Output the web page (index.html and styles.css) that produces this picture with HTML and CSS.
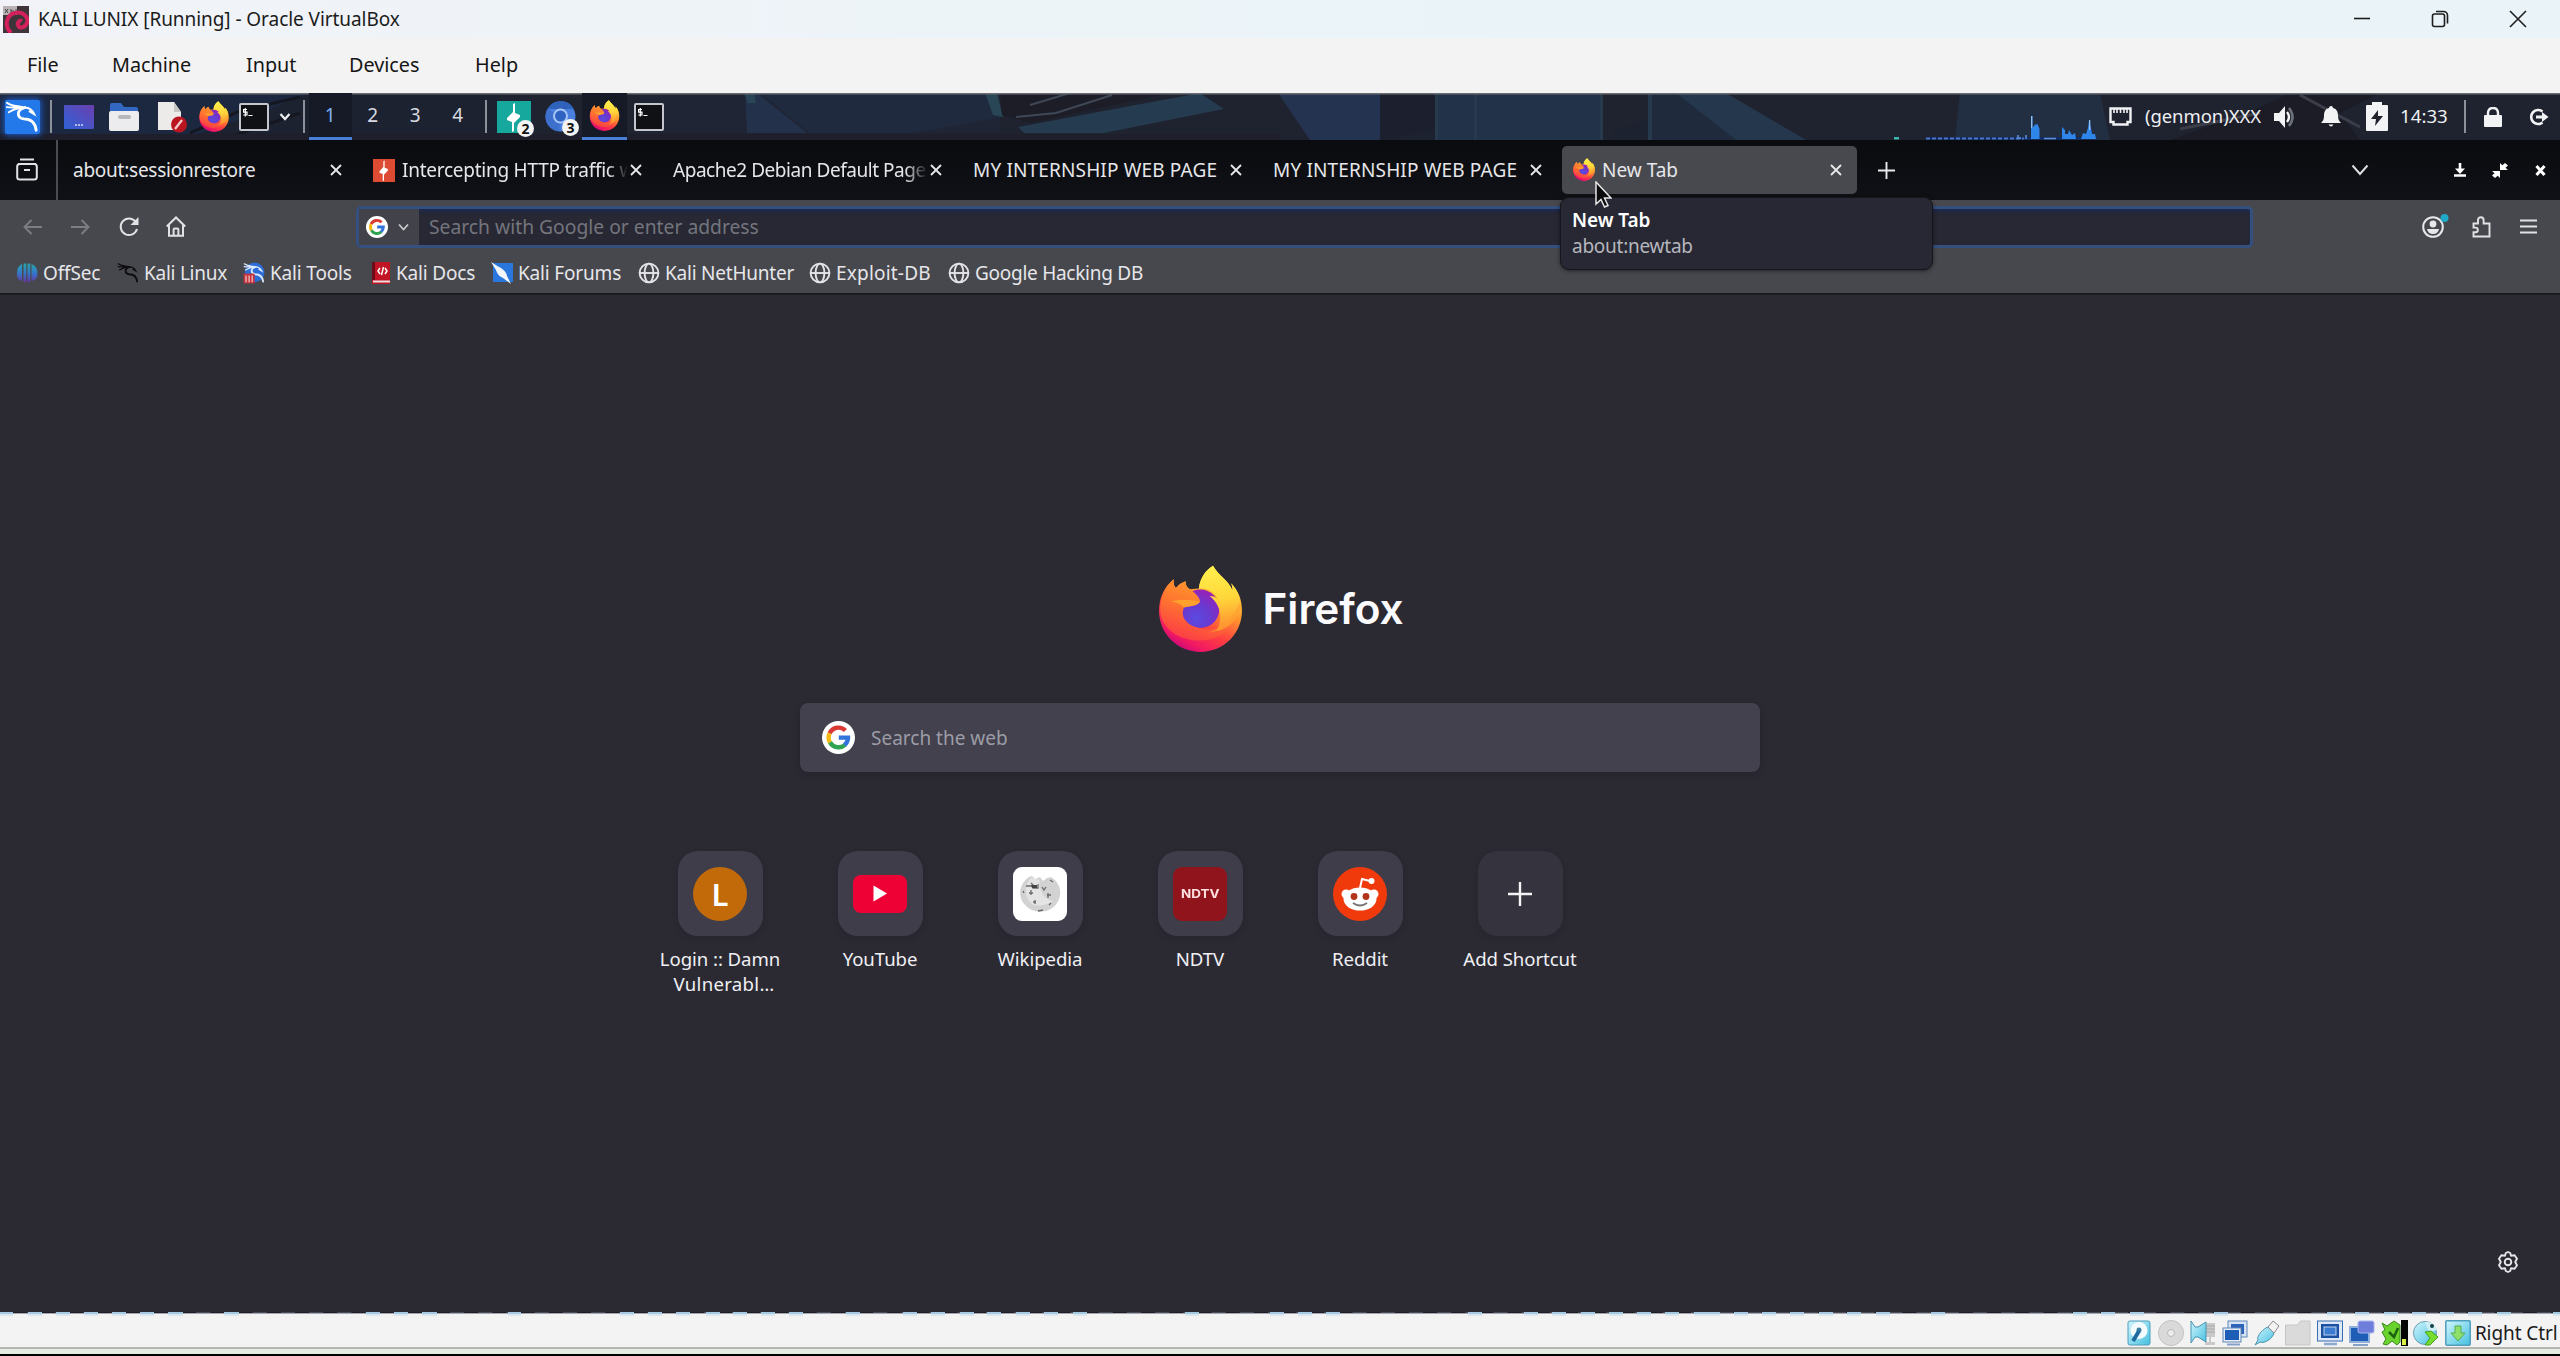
FILE: index.html
```html
<!DOCTYPE html>
<html lang="en">
<head>
<meta charset="utf-8">
<title>KALI LUNIX [Running] - Oracle VirtualBox</title>
<link rel="stylesheet" href="styles.css">
</head>
<body>
<svg class="defs" aria-hidden="true">
  <defs>
    <linearGradient id="ffBody" x1="0.8" y1="0.1" x2="0.3" y2="1">
      <stop offset="0" stop-color="#ffe03f"/><stop offset="0.35" stop-color="#ff9a2e"/><stop offset="0.65" stop-color="#ff4040"/><stop offset="0.88" stop-color="#f01864"/><stop offset="1" stop-color="#c6087c"/>
    </linearGradient>
    <linearGradient id="ffHead" x1="0.7" y1="0" x2="0.3" y2="1">
      <stop offset="0" stop-color="#ffa32b"/><stop offset="0.5" stop-color="#ff7430"/><stop offset="1" stop-color="#fb3a46"/>
    </linearGradient>
    <linearGradient id="ffFlame" x1="0.4" y1="0" x2="0.5" y2="1">
      <stop offset="0" stop-color="#fff04d"/><stop offset="0.5" stop-color="#ffd83b"/><stop offset="1" stop-color="#ff8a2f"/>
    </linearGradient>
    <radialGradient id="ffGlobe" cx="0.4" cy="0.75" r="0.8">
      <stop offset="0" stop-color="#5a4be0"/><stop offset="0.5" stop-color="#6b38cf"/><stop offset="1" stop-color="#9c1fb4"/>
    </radialGradient>
    <linearGradient id="desk" x1="0" y1="1" x2="1" y2="0"><stop offset="0" stop-color="#2f63d6"/><stop offset="1" stop-color="#6b3fb0"/></linearGradient>
    <linearGradient id="off" x1="0" y1="0" x2="0" y2="1"><stop offset="0" stop-color="#27a5a8"/><stop offset="0.5" stop-color="#3477c9"/><stop offset="1" stop-color="#6a2fa0"/></linearGradient>
    <linearGradient id="aqua" x1="0" y1="0" x2="1" y2="1"><stop offset="0" stop-color="#d2f6fd"/><stop offset="1" stop-color="#45bfe0"/></linearGradient>
  </defs>
  <symbol id="firefox" viewBox="0 0 246 258">
    <path fill="url(#ffBody)" d="M44 42C18 62 0 95 0 136c0 68 55 122 123 122s123-54 123-122c0-32-10-60-32-82 3 8 4 14 4 22C205 45 175 30 160 2c-20 13-38 33-42 68L92 72C82 66 78 58 79 48 68 52 58 58 50 68 44 62 42 52 44 42Z"/>
    <circle cx="122" cy="130" r="57" fill="url(#ffGlobe)"/>
    <path fill="url(#ffHead)" d="M79 48C68 52 58 58 50 68 44 62 42 52 44 42 16 64 2 98 4 140c4 38 40 80 110 84 50 2 90-20 106-60-30 26-60 32-96 24-44-8-62-36-50-62 14-6 38-2 48-18-2-13-14-24-30-36C82 66 78 58 79 48Z"/>
    <path fill="#ffb02c" opacity="0.7" d="M34 108c26-8 56-6 88 0-8 14-32 14-48 18-8-10-22-16-40-18Z"/>
    <path fill="url(#ffFlame)" d="M118 70C122 35 140 15 160 2c15 28 48 44 58 74 0-8-1-14-4-22 24 26 34 60 22 92-12 26-38 44-66 50 18-30 18-74-20-104 12 0 20 4 26 12-10-22-32-36-58-34Z"/>
    <path fill="#ff9b30" opacity="0.6" d="M240 110c2 50-30 86-94 90 44-14 74-40 94-90Z"/>
  </symbol>
  <symbol id="google" viewBox="0 0 33 33">
    <circle cx="16.5" cy="16.5" r="16.5" fill="#fff"/>
    <g fill="none" stroke-width="4.4">
      <path stroke="#d93a34" d="M7.6 12.2A9.8 9.8 0 0 1 23.4 9.5"/>
      <path stroke="#f5b912" d="M8 21.4a9.800 9.800 0 0 1-.4-9.200"/>
      <path stroke="#2fa350" d="M23 23.8A9.800 9.800 0 0 1 8 21.4"/>
      <path stroke="#3273dc" d="M16.8 16.6h9.200a9.800 9.800 0 0 1-3.400 7.400"/>
    </g>
  </symbol>
  <symbol id="globe" viewBox="0 0 22 22">
    <g fill="none" stroke="#e4e4e8" stroke-width="1.9"><circle cx="11" cy="11" r="9.4"/><ellipse cx="11" cy="11" rx="4.4" ry="9.4"/><path d="M1.6 11h18.8"/></g>
  </symbol>
  <symbol id="dragon" viewBox="0 0 36 34">
    <path fill="none" stroke="currentColor" stroke-linecap="round" stroke-width="2" d="M2 2c5 4 12 3 19 5M2 6.500c6 1 13 0 19 .5M4 12c5-3 11-5 17-5 5 0 8 3 10 7l-5-3"/>
    <path fill="none" stroke="currentColor" stroke-linecap="round" stroke-width="3" d="M21 7c-9 2-9 11-1 12 8 0 12 4 13 12"/>
  </symbol>
  <symbol id="term" viewBox="0 0 30 28">
    <rect x="1" y="1" width="28" height="26" rx="1" fill="#101114" stroke="#c3c7cd" stroke-width="2"/>
    <path fill="none" stroke="#fff" stroke-width="1.2" d="M8 6.500H4.600v2.700H8v2.800H4.300M6.300 5v8.500M9.500 12.500h4"/>
  </symbol>
  <symbol id="x" viewBox="0 0 12 12"><path stroke="#e8e8ea" stroke-width="1.8" d="M1 1l10 10M11 1L1 11"/></symbol>
  <symbol id="burp" viewBox="0 0 34 32"><path fill="#fff" d="M18 2v10l5 2v2l-6 6v8l-2 1v-10l-5-2v-2l6-6V3Z"/></symbol>
</svg>

<header class="titlebar">
  <svg class="app-icon" viewBox="0 0 26 27"><rect width="26" height="27" fill="#3e3439"/><rect width="14" height="9" fill="#b9b3b5"/><path d="M2 7l3-4M2 3l3 4M8 3v4h3V5H8M13 3v4" stroke="#444" fill="none"/><path d="M8 27C1 20 3 9 12 7c8-2 14 4 12 10-2 5-8 6-9 2-1-3 2-5 4-4" fill="none" stroke="#d3215c" stroke-width="4"/></svg>
  <span class="title">KALI LUNIX [Running] - Oracle VirtualBox</span>
  <div class="win-buttons">
    <svg width="18" height="20" viewBox="0 0 18 20"><path d="M1 9.500h16" stroke="#1d1d1d" stroke-width="1.600"/></svg>
    <svg width="18" height="20" viewBox="0 0 18 20" fill="none" stroke="#1d1d1d" stroke-width="1.600"><rect x="1.500" y="5" width="12" height="12.500" rx="2"/><path d="M5 2.500h7.500a4 4 0 0 1 4 4v8"/></svg>
    <svg width="18" height="20" viewBox="0 0 18 20"><path d="M1 2l16 16M17 2L1 18" stroke="#1d1d1d" stroke-width="1.600"/></svg>
  </div>
</header>
<nav class="menubar"><span class="m-file">File</span><span class="m-machine">Machine</span><span class="m-input">Input</span><span class="m-devices">Devices</span><span>Help</span></nav>

<section class="panel">
  <svg class="wallpaper" viewBox="0 0 2560 47" preserveAspectRatio="none">
    <rect width="2560" height="47" fill="#1f222f"/>
    <g opacity="0.75">
    <path fill="#212638" d="M640 0h360v40H640z"/>
    <path fill="#1b2a45" d="M0 0h500v20L300 47H0z"/><path fill="#1d2231" d="M180 47L260 20l50-20h190v47z"/>
    <path fill="#263653" d="M745 0h12l50 40h-60z"/><path fill="#202d43" d="M760 0h230l12 24-90 16H810z"/>
    <path fill="#2d5264" d="M744 0h10l2 10h-8zM985 0h12l6 24-10-2z"/>
    <path fill="#1b1c25" d="M1000 0h170l-140 30-28-8z"/><path fill="#27445a" d="M1018 34L1200 0l24 16-120 24h-80z"/>
    <path fill="none" stroke="#4a5463" stroke-width="2" d="M1016 24l40-4 56-18M1030 12l40-12"/>
    <path fill="#26395a" d="M1278 0h102v47h-70z"/><path fill="#1c202e" d="M1380 0h55v47h-55z"/>
    <path fill="#223852" d="M1437 0h163v47h-163z"/><path fill="#1c2230" d="M1384 47l50-10v10zM1612 38l35-10v19h-35z"/>
    <path fill="#2a4258" d="M1435 0h3v47h-3zM1474 0h3v47h-3zM1600 0h3v47h-3zM1648 0h4v47h-4z"/>
    <path fill="#1f2f42" d="M1652 0h24l60 47h-84z"/><path fill="#283f58" d="M1676 0h50l80 47h-70z"/>
    <path fill="#233347" d="M1960 0h140l10 47H1955z"/><path fill="#1a1b22" d="M2170 47l80-28 40-19h90l-40 20 20 27z"/>
    <path fill="none" stroke="#454852" stroke-width="3" d="M2180 36l80-16M2300 2l60 32"/>
    <path fill="none" stroke="#12141c" stroke-width="3" d="M190 40l50-22 60-14M230 44l70-24"/>
    </g>
    <rect y="41" width="1280" height="6" fill="#1f1e2b"/><rect width="2560" height="1.500" fill="#6b6d72"/>
  </svg>
  <div class="kali-menu"><svg width="34" height="34"><use href="#dragon"/></svg></div>
  <i class="sep s1"></i>
  <svg class="p-desk" width="30" height="24" viewBox="0 0 30 24"><rect width="30" height="24" rx="1" fill="url(#desk)"/><path d="M11 20h2m1 0h2m1 0h2" stroke="#d8daf5" stroke-width="1.600"/></svg>
  <svg class="p-folder" width="30" height="28" viewBox="0 0 30 28"><path d="M1 2q0-2 2-2h9l3 4h12q2 0 2 2v6H1z" fill="#3268c4"/><rect y="8" width="30" height="20" rx="2" fill="#ececee"/><rect x="9" y="12" width="13" height="4" rx="2" fill="#b6b7bb"/></svg>
  <svg class="p-doc" width="32" height="32" viewBox="0 0 32 32"><path d="M1 1h16l7 10v18H1z" fill="#ecebea"/><path d="M17 1l7 10h-7z" fill="#c8c6c4"/><circle cx="22" cy="23.500" r="8" fill="#ba1620"/><path d="M18 28l7-9" stroke="#f3cfd0" stroke-width="2.200"/></svg>
  <svg class="p-ff" width="30" height="31"><use href="#firefox"/></svg>
  <svg class="p-term" width="30" height="28"><use href="#term"/></svg>
  <svg class="p-chev" width="12" height="8" viewBox="0 0 12 8"><path d="M1.500 1L6 6l4.500-5" fill="none" stroke="#eceef1" stroke-width="2.200"/></svg>
  <i class="sep s2"></i>
  <div class="workspaces"><span class="current">1</span><span>2</span><span>3</span><span>4</span></div>
  <i class="sep s3"></i>
  <div class="task t-burp"><svg width="34" height="32"><rect width="34" height="32" fill="#16a79d"/><use href="#burp"/></svg><b class="badge">2</b></div>
  <div class="task t-chrome"><svg width="31" height="31" viewBox="0 0 31 31"><circle cx="15.500" cy="15.500" r="15" fill="#4a7fe0"/><path d="M15.500 15.500L2.500 8A15 15 0 0 0 14 30.500z" fill="#3d70cc"/><path d="M2.500 8a15 15 0 0 1 26.500 0z" fill="#2f62bb"/><circle cx="15.500" cy="15" r="7.500" fill="#a9c5f6"/><circle cx="15.500" cy="15" r="5.500" fill="#2f63c2"/></svg><b class="badge">3</b></div>
  <div class="task-active"><svg width="31" height="31"><use href="#firefox"/></svg></div>
  <svg class="t-term" width="30" height="28"><use href="#term"/></svg>
  <div class="tray">
    <svg class="graph" width="206" height="46" viewBox="0 0 206 46">
      <rect x="32" y="43.500" width="171" height="2" fill="#0a2d78"/><path d="M32 44.500h98" stroke="#4b74c4" stroke-width="2" stroke-dasharray="4 2"/>
      <path fill="#2f86ea" d="M137 45V22h1.500v12l2-3 3-1 2 5v10zM168 45V33l3 3v4h3l1-4 3 5 3-2 1 6zM187 45l2-6 3 1 2-6 1-8 2 8 1 6h3l1 5z"/>
      <path fill="#8fc0f0" d="M137 22h1.300v12h-1.300zM195 26h1.300v10h-1.300z"/><path d="M124 45v-4M126 45v-2M132 45v-4M150 44.500h12" stroke="#5f92da" stroke-width="1.500"/>
      <rect x="0" y="43" width="5" height="2.500" fill="#39b9ae"/>
    </svg>
    <svg class="eth" width="23" height="19" viewBox="0 0 23 19"><path d="M1.500 1.500h20V15h-3v2.500h-14V15h-3z" fill="none" stroke="#f0f1f3" stroke-width="2.400"/><path d="M5 2v4M8 2v4M11.500 2v4M15 2v4M18 2v4" stroke="#f0f1f3" stroke-width="1.600"/></svg>
    <span class="genmon">(genmon)XXX</span>
    <svg class="vol" width="24" height="24" viewBox="0 0 24 24"><path d="M1 8h5l6-7v22l-6-7H1z" fill="#f2f3f5"/><path d="M14 7q4 5 0 10" fill="none" stroke="#f2f3f5" stroke-width="2.400"/><path d="M16 3q7 9 0 18" fill="none" stroke="#6c7079" stroke-width="2.600"/></svg>
    <svg class="bell" width="20" height="21" viewBox="0 0 20 21"><path d="M10 0q2 0 2 2c4 1 5 4 5 8 0 3 1 5 3 7H0c2-2 3-4 3-7 0-4 1-7 5-8q0-2 2-2zM7.500 18.500h5q-2.500 4-5 0z" fill="#f2f3f5"/></svg>
    <svg class="batt" width="22" height="29" viewBox="0 0 22 29"><path d="M1 3h5V0h10v3h5q1 0 1 1v24q0 1-1 1H1q-1 0-1-1V4q0-1 1-1z" fill="#f2f3f5"/><path d="M12 8l-7 9h5l-1 7 8-10h-5z" fill="#20222d"/></svg>
    <span class="clock">14:33</span>
    <i class="sep s4"></i>
    <svg class="lock" width="18" height="20" viewBox="0 0 18 20"><rect y="8" width="18" height="12" rx="1" fill="#f2f3f5"/><path d="M4 9V6q0-5 5-5t5 5v3" fill="none" stroke="#f2f3f5" stroke-width="2.400"/></svg>
    <svg class="logout" width="20" height="18" viewBox="0 0 20 18"><path d="M13.500 3.500A7 7 0 1 0 13.500 14.500" fill="none" stroke="#f2f3f5" stroke-width="2.600"/><path d="M7 7.600h6V4l6.500 5-6.500 5v-3.600H7z" fill="#f2f3f5"/></svg>
  </div>
</section>

<section class="tabbar">
  <div class="view"><svg width="22" height="23" viewBox="0 0 22 23" fill="none" stroke="#e2e2e5" stroke-width="2"><path d="M4 1.500h14M2 6h18"/><rect x="1.200" y="6" width="19.600" height="15.500" rx="2.500"/><path d="M8 12h6"/></svg></div>
  <div class="tab"><span class="label a">about:sessionrestore</span><svg><use href="#x"/></svg></div>
  <div class="tab"><svg class="fav" viewBox="0 0 34 32" preserveAspectRatio="none"><rect width="34" height="32" fill="#dd4b32"/><use href="#burp"/></svg><span class="label">Intercepting HTTP traffic wi</span><svg><use href="#x"/></svg></div>
  <div class="tab"><span class="label b">Apache2 Debian Default Page: I</span><svg><use href="#x"/></svg></div>
  <div class="tab"><span class="label c">MY INTERNSHIP WEB PAGE</span><svg><use href="#x"/></svg></div>
  <div class="tab"><span class="label c">MY INTERNSHIP WEB PAGE</span><svg><use href="#x"/></svg></div>
  <div class="tab selected"><svg class="fav"><use href="#firefox"/></svg><span class="label">New Tab</span><svg><use href="#x"/></svg></div>
  <svg class="plus" width="17" height="17" viewBox="0 0 17 17"><path d="M8.500 0v17M0 8.500h17" stroke="#e8e8ea" stroke-width="1.900"/></svg>
  <div class="wm">
    <svg width="18" height="12" viewBox="0 0 18 12"><path d="M1.500 1.500L9 10l7.500-8.500" fill="none" stroke="#e2e2e5" stroke-width="1.900"/></svg>
    <svg class="w1" width="12" height="14" viewBox="0 0 12 14"><path d="M6 0v7M0 12.500h12" stroke="#fff" stroke-width="2.600"/><path d="M1 5.500h10L6 11z" fill="#fff"/></svg>
    <svg class="w2" width="16" height="15" viewBox="0 0 16 15"><path d="M8 7V0l2.300 2.300L13 0l3 2.500-2.500 2.200L16 7zM8 8v7l-2.300-2.300L3 15l-3-2.500 2.500-2.200L0 8z" fill="#fff"/></svg>
    <svg class="w3" width="11" height="11" viewBox="0 0 11 11"><path d="M1.500 1l8 9M9.500 1l-8 9" stroke="#fff" stroke-width="3"/></svg>
  </div>
  <div class="tooltip"><b>New Tab</b><span>about:newtab</span></div>
  <svg class="cursor" width="17" height="27" viewBox="0 0 17 27"><path d="M1 1v22l5-4.500 3.500 7.500 3.500-1.500-3.500-7.500H16z" fill="#0b0b0d" stroke="#e8e8ea" stroke-width="1.500"/></svg>
</section>

<section class="toolbar">
  <svg class="back" width="19" height="16" viewBox="0 0 19 16"><path d="M8.500 1L1.500 8l7 7M1.500 8H19" fill="none" stroke="#7d7e83" stroke-width="1.900"/></svg>
  <svg class="fwd" width="19" height="16" viewBox="0 0 19 16"><path d="M10.500 1l7 7-7 7M17.500 8H0" fill="none" stroke="#7d7e83" stroke-width="1.900"/></svg>
  <svg class="reload" width="20" height="20" viewBox="0 0 20 20"><path d="M16.500 4.500A8.300 8.300 0 1 0 18 12" fill="none" stroke="#e2e2e5" stroke-width="2"/><path d="M19.500 0v8h-8z" fill="#e2e2e5"/></svg>
  <svg class="home" width="20" height="21" viewBox="0 0 20 21"><path d="M.8 10.500L10 1.500l9.200 9M3 9v10.800h14V9M7.600 19.500v-6q0-1 1-1h2.800q1 0 1 1v6" fill="none" stroke="#e2e2e5" stroke-width="2"/></svg>
  <div class="urlbar">
    <div class="engine"><svg width="22" height="22"><use href="#google"/></svg><svg width="11" height="8" viewBox="0 0 11 8"><path d="M1 1.500l4.500 5 4.500-5" fill="none" stroke="#c9cacd" stroke-width="1.800"/></svg></div>
    <span class="placeholder">Search with Google or enter address</span>
  </div>
  <svg class="account" width="28" height="25" viewBox="0 0 28 25"><circle cx="11" cy="14" r="9.800" fill="none" stroke="#e8e8ea" stroke-width="2"/><circle cx="11" cy="11" r="3.400" fill="#e8e8ea"/><path d="M5 16h12q-1 5-6 5t-6-5z" fill="#e8e8ea"/><circle cx="22.500" cy="5" r="4" fill="#20a8c8"/></svg>
  <svg class="ext" width="19" height="22" viewBox="0 0 19 22"><path d="M1.500 7.500H6V4a2.800 2.800 0 0 1 5.600 0v3.500H17.500V20.500H1.500v-4.300h2a2.300 2.300 0 0 0 0-4.600h-2z" fill="none" stroke="#e2e2e5" stroke-width="1.900"/></svg>
  <svg class="burger" width="17" height="15" viewBox="0 0 17 15"><path d="M0 1.500h17M0 7.500h17M0 13.500h17" stroke="#e2e2e5" stroke-width="1.900"/></svg>
</section>

<section class="bookmarks">
  <div class="bm w-off"><svg viewBox="0 0 22 22"><path d="M1 12Q1 4 6 2v17q-5-1-5-7zM7.500 1.500h2.800V21L7.500 19zM11.500 1.500h2.800V19l-2.800 2zM15.500 2q6 2 6 10 0 6-6 7z" fill="url(#off)"/></svg>OffSec</div>
  <div class="bm w-linux"><svg class="blk" viewBox="0 0 36 34"><use href="#dragon"/></svg>Kali Linux</div>
  <div class="bm w-tools"><svg viewBox="0 0 36 34"><circle cx="19" cy="16" r="16" fill="#2c6cd6"/><g color="#dbe9ff"><use href="#dragon"/></g><path d="M1 18h18v16H1z" fill="#c6323c"/><path d="M5 21v11M10 21v11M15 21v11" stroke="#f3c6c8" stroke-width="2"/></svg>Kali Tools</div>
  <div class="bm w-docs"><svg viewBox="0 0 20 22"><rect x="1" width="18" height="22" fill="#c11424"/><path d="M1 0h3v18H1z" fill="#6d0c16"/><path d="M2 19.500h17" stroke="#f0dfe0" stroke-width="2"/><path d="M9 6l-2 3 2 3M14 6l2 3-2 3M12.500 5l-2 8" fill="none" stroke="#fff" stroke-width="1.500"/></svg>Kali Docs</div>
  <div class="bm w-forums"><svg viewBox="0 0 22 22"><rect x="2" y="1" width="20" height="19" fill="#2977dc"/><path d="M0 0q6 4 10 6 5 3 6 8l4 8-8-6q-6-3-7-8z" fill="#f2f6fb"/></svg>Kali Forums</div>
  <div class="bm w-net"><svg><use href="#globe"/></svg>Kali NetHunter</div>
  <div class="bm w-exp"><svg><use href="#globe"/></svg>Exploit-DB</div>
  <div class="bm w-ghdb"><svg><use href="#globe"/></svg>Google Hacking DB</div>
</section>

<main class="newtab">
  <div class="brand"><svg width="83" height="87"><use href="#firefox"/></svg><span>Firefox</span></div>
  <div class="search"><svg width="33" height="33"><use href="#google"/></svg><span>Search the web</span></div>
  <div class="shortcuts">
    <div class="tile"><div class="box"><div class="letter">L</div></div><p>Login :: Damn<br><span class="vul">Vulnerabl…</span></p></div>
    <div class="tile"><div class="box"><svg width="56" height="40" viewBox="0 0 56 40"><rect x="1" y="1" width="54" height="38" rx="8" fill="#ee0236"/><path d="M21.500 11.500L35 19.500l-13.500 8z" fill="#fff"/></svg></div><p>YouTube</p></div>
    <div class="tile"><div class="box"><svg width="54" height="54" viewBox="0 0 54 54"><rect width="54" height="54" rx="9" fill="#fff"/><path d="M16 10a20 19 0 1 0 26 3l-4-3-4 1-4 3-3-4-5 2-3-3z" fill="#d2d2d2"/><path d="M18 11a18 18 0 0 0 2 27 26 24 0 0 0 20-4q-9-2-12-10-3-7-1-11z" fill="#e4e4e4"/><path d="M13 19h7v2h5v-4M18 16l5 5M29 20l2 3 2-3M16 26h4M18 23v5M34 28h4M35 26v5M20 35h3M22 33v4M36 38l2-2M37 13l3 2M10 24l1 2M30 43l-5 1" fill="none" stroke="#6b6b6b" stroke-width="1.300"/><path d="M18 18h6v3h-5z" fill="#444"/></svg></div><p>Wikipedia</p></div>
    <div class="tile"><div class="box"><div class="ndtv"><span>NDTV</span></div></div><p>NDTV</p></div>
    <div class="tile"><div class="box"><svg width="54" height="54" viewBox="0 0 54 54"><circle cx="27" cy="27" r="27" fill="#f13a0c"/><path d="M27 21l2-9 8 2" fill="none" stroke="#fff" stroke-width="2"/><circle cx="38.500" cy="14" r="3" fill="#fff"/><circle cx="13" cy="27" r="4.500" fill="#fff"/><circle cx="41" cy="27" r="4.500" fill="#fff"/><ellipse cx="27" cy="32" rx="16.500" ry="11.500" fill="#fff"/><circle cx="21" cy="29.500" r="3.400" fill="#b3331b"/><circle cx="33" cy="29.500" r="3.400" fill="#b3331b"/><path d="M20 36q7 5 14 0" fill="none" stroke="#777" stroke-width="2"/></svg></div><p>Reddit</p></div>
    <div class="tile"><div class="box add"><svg width="24" height="24" viewBox="0 0 24 24"><path d="M12 0v24M0 12h24" stroke="#f4f4f6" stroke-width="2.400"/></svg></div><p>Add Shortcut</p></div>
  </div>
  <svg class="gear" width="22" height="22" viewBox="0 0 22 22" fill="none" stroke="#e6e6ea" stroke-width="1.900" stroke-linejoin="round"><path d="M11 1l2.200 1 .8 2.700 3.600-.5 2.400 3.500-1.800 3.300 1.800 3.300-2.400 3.500-3.600-.5L13.200 20 11 21l-2.200-1-.8-2.700-3.600.5L2 14.300 3.800 11 2 7.700l2.400-3.500 3.600.5L8.800 2z"/><circle cx="11" cy="11" r="3.300"/></svg>
</main>

<footer class="statusbar">
  <svg class="dashes" width="2560" height="5" viewBox="0 0 2560 5">
    <path d="M0 .5H2560" stroke="#4b4c58"/>
    <path d="M0 1.500H2560" stroke="#a3a7b3"/>
    <path d="M13 .5H2560" stroke="#1f1e25" stroke-dasharray="14.100 14.100"/>
    <path id="lit" stroke="#a5c9e2" stroke-width="2" d="M0 1h13M28 1h14M56 1h14M84 1h14M112 1h14M140 1h14M168 1h15M224 1h15M366 1h14M394 1h14M422 1h15M508 1h13M620 1h14M648 1h14M676 1h14M706 1h14M733 1h14M761 1h14M789 1h14M846 1h14M903 1h14M931 1h14M960 1h14M987 1h14M1016 1h14M1044 1h14M1073 1h14M1185 1h14M1270 1h14M1298 1h14M1326 1h14M1468 1h14M1524 1h14M1552 1h14M1581 1h14M1609 1h14M1637 1h14M1665 1h14M1694 1h26M1734 1h14M1762 1h14M1790 1h14M1819 1h14M1847 1h14M1876 1h14M1931 1h14M2073 1h14M2101 1h14M2130 1h14M2214 1h14M2327 1h14M2355 1h14M2384 1h14M2412 1h14M2440 1h14M2468 1h14M2497 1h14M2553 1h7"/>
    <use href="#lit" y="2" opacity="0.300"/>
  </svg>
  <div class="indicators">
    <svg viewBox="0 0 26 26"><rect x="2" y="1" width="22" height="24" rx="2" fill="url(#aqua)" stroke="#4f9dbb"/><circle cx="13" cy="10.500" r="8.500" fill="#f4fbfd"/><circle cx="13" cy="10" r="2.500" fill="#3c7fa3"/><path d="M13 11l-6 10" stroke="#1f6ba0" stroke-width="4"/></svg>
    <svg viewBox="0 0 26 26"><circle cx="13" cy="13" r="12.500" fill="#d9d9d9" stroke="#c2c2c2"/><circle cx="13" cy="13" r="3.500" fill="#ececec" stroke="#b7b7b7"/></svg>
    <svg viewBox="0 0 26 26"><path d="M16 3h9v14h-9zM15 22h10v3H15zM19 17h2v6h-2z" fill="#c9c9c9"/><path d="M16 6h9M16 9h9M16 12h9" stroke="#a8a8a8"/><path d="M1 1l4 6h3l8-5v20l-8-5H5l-4 6z" fill="url(#aqua)" stroke="#4b93b0"/></svg>
    <svg viewBox="0 0 26 26"><rect x="6" y="1" width="19" height="16" fill="#d6e3f4" stroke="#6087b8"/><rect x="9" y="4" width="13" height="10" fill="#2e64b8"/><rect x="1" y="8" width="18" height="14" fill="#e3ecf8" stroke="#6087b8"/><rect x="3" y="10" width="14" height="10" fill="#1f5eb6"/><path d="M5 24.500h13" stroke="#84a2c9" stroke-width="2"/></svg>
    <svg viewBox="0 0 26 26"><path d="M1 25l3-5c-2-4 6-12 10-13l6 6c-1 5-9 11-14 9z" fill="url(#aqua)" stroke="#4b93b0"/><path d="M14 7l5-6 6 5-5 7z" fill="#f3f3f3" stroke="#8b8b8b"/></svg>
    <svg viewBox="0 0 26 26"><path d="M.5 5h12l3-4h9.500v24H.5z" fill="#dadada" stroke="#c6c6c6"/></svg>
    <svg viewBox="0 0 26 26"><rect x=".5" y="1" width="25" height="20" fill="#dce8f8" stroke="#3b6fb0"/><rect x="4" y="4" width="18" height="14" fill="#1c50a2"/><rect x="7" y="7" width="12" height="8" fill="#3c7cd0" stroke="#bcd2ee"/><path d="M7 24h13" stroke="#8aa9cf" stroke-width="2.500"/></svg>
    <svg viewBox="0 0 26 26"><rect x="1" y="7" width="19" height="15" fill="#1f5eb6" stroke="#8fb0db" stroke-width="2"/><path d="M4 25h15" stroke="#84a2c9" stroke-width="2"/><rect x="9" y="1" width="16" height="12" rx="2" fill="#6f7edb" stroke="#a9b3ee"/></svg>
    <svg viewBox="0 0 26 26"><path d="M1 3l5 3 7-5 6 4v17l-3 3-5-4-5 4-4-1 3-5-4-7 3-2z" fill="#6bd32d" stroke="#3a8a1c"/><path d="M8 12l5 5 4-9" fill="none" stroke="#1c6012" stroke-width="2.500"/><rect x="20" width="7" height="26" fill="#050505"/><rect x="21" y="19" width="4" height="6" fill="#d9ef48"/></svg>
    <svg viewBox="0 0 26 26"><circle cx="12" cy="13" r="11.500" fill="url(#aqua)" stroke="#6c9db0"/><path d="M12 2q9-1 12 8l-8 2z" fill="#cfeff6"/><circle cx="19" cy="6" r="2" fill="#144"/><path d="M12 12l6-1 7 6-8 8h-5l5-7z" fill="#76dc2e" stroke="#47a01e"/></svg>
    <svg viewBox="0 0 26 26"><rect x=".8" y=".8" width="24.400" height="24.400" rx="1" fill="url(#aqua)" stroke="#4f9dbb" stroke-width="1.500"/><path d="M10 6h6v7h4l-7 8-7-8h4z" fill="#8fe06a" stroke="#54ae52"/></svg>
  </div>
  <span class="hostkey">Right Ctrl</span>
</footer>
<div class="edge"></div>
</body>
</html>
```
FILE: styles.css
```css
* { box-sizing: border-box; }
html, body { margin: 0; }
body {
  width: 2560px; height: 1356px; overflow: hidden;
  display: flex; flex-direction: column;
  background: #2b2a33; color: #e6e6ea;
  font: 19px/24px "Noto Sans", sans-serif;
  white-space: nowrap;
}
svg { display: block; flex: none; }
span { flex: none; }
.defs { position: absolute; width: 0; height: 0; }

.titlebar {
  height: 38px; flex: none; display: flex; align-items: center;
  padding: 0 33px 0 3px; color: #1b1b1b;
  background: linear-gradient(90deg, #f1f3f8, #eaf4f8 60%, #eaf4f8);
}
.app-icon { width: 26px; height: 27px; }
.title { margin-left: 9px; letter-spacing: -0.060px; }
.win-buttons { margin-left: auto; display: flex; gap: 60px; }

.menubar {
  height: 55px; flex: none; display: flex; align-items: center;
  padding: 0 0 2px 27px; background: #f3f3f3; color: #151515; font-size: 19.800px;
}
.m-file { width: 85px; }
.m-machine { width: 134px; }
.m-input { width: 103px; }
.m-devices { width: 126px; }

.panel {
  position: relative; height: 47px; flex: none;
  display: flex; align-items: center; background: #1f222f;
}
.panel > * { position: relative; flex: none; }
.panel > .wallpaper { position: absolute; inset: 0; width: 2560px; height: 47px; }
.kali-menu {
  margin-left: 5px; width: 35px; height: 34px; background: #2378ea; color: #fff;
  box-shadow: 0 0 6px 1px #1d5fd0; border-radius: 2px;
}
.sep { width: 2px; height: 33px; background: #8d9199; flex: none; }
.s1 { margin-left: 10px; }
.p-desk { margin-left: 12px; }
.p-folder { margin-left: 15px; }
.p-doc { margin-left: 18px; }
.p-ff { margin-left: 10px; }
.p-term { margin-left: 10px; }
.p-chev { margin-left: 10px; }
.s2 { margin-left: 12px; }
.workspaces { display: flex; margin-left: 4px; height: 47px; }
.workspaces span { width: 42.500px; text-align: center; line-height: 44px; color: #d8dbe1; }
.workspaces .current { background: #161a27; border-bottom: 3px solid #4a7fd8; color: #7fb0ee; }
.s3 { margin-left: 6px; }
.t-burp { margin-left: 10px; }
.t-chrome { margin-left: 14px; }
.badge {
  position: absolute; right: -3px; bottom: -4px; width: 17px; height: 17px;
  border-radius: 50%; background: #f4f4f4; color: #111;
  font-size: 14px; line-height: 17px; text-align: center;
}
.task-active {
  margin-left: 6px; width: 45px; height: 47px; padding: 7px 7px 0;
  background: #161a27; border-bottom: 3px solid #4a7fd8;
}
.t-term { margin-left: 7px; }
.tray { display: flex; align-items: center; margin-left: auto; padding-right: 11px; height: 47px; color: #eef0f3; }
.graph { align-self: flex-end; width: 206px; }
.eth { margin-left: 9px; }
.genmon { margin-left: 13px; width: 118px; font-size: 18.500px; letter-spacing: -0.080px; margin-top: -2px; }
.vol { margin-left: 10px; }
.bell { margin-left: 24px; }
.batt { margin-left: 25px; }
.clock { margin-left: 12px; width: 48px; font-size: 18.700px; margin-top: -2px; }
.s4 { margin-left: 16px; }
.lock { margin-left: 18px; }
.logout { margin-left: 27px; }

.tabbar {
  position: relative; height: 60px; flex: none; display: flex; align-items: center;
  background: linear-gradient(#0a0b0f, #101116);
}
.view { width: 58px; height: 60px; border-right: 2px solid #4b4c51; padding: 18px 16px; }
.tab { width: 300px; height: 48px; display: flex; align-items: center; padding: 0 15px 0 16px; }
.tab > svg { width: 12px; height: 12px; }
.tab > .fav { width: 22px; height: 23px; margin-right: 7px; }
.tab .label { flex: 1; min-width: 0; overflow: hidden; letter-spacing: -0.250px; }
.tab .a { margin-left: -1px; }
.tab .b { letter-spacing: -0.460px; }
.tab .c { letter-spacing: 0.150px; }
.tab:nth-child(2) { width: 299px; }
.tab:nth-child(3) .label, .tab:nth-child(4) .label {
  margin-right: 2px;
  -webkit-mask-image: linear-gradient(90deg, #000 91%, transparent); mask-image: linear-gradient(90deg, #000 91%, transparent);
}
.tab.selected { width: 295px; margin-left: 5px; padding-left: 11px; background: #48494e; border-radius: 5px; margin-top: -1px; }
.tab.selected .label { letter-spacing: 0; }
.plus { margin-left: 21px; }
.wm { display: flex; align-items: center; margin-left: auto; padding-right: 14px; }
.w1 { margin-left: 85px; }
.w2 { margin-left: 26px; }
.w3 { margin-left: 27px; }
.tooltip {
  position: absolute; left: 1560px; top: 57px; z-index: 3; width: 373px; height: 73px;
  display: flex; flex-direction: column; padding: 9px 11px; line-height: 26px;
  background: #272833; border: 1px solid #15151c; border-radius: 9px;
  box-shadow: 0 1px 4px rgba(0, 0, 0, .5); color: #b6b6bd; letter-spacing: -0.250px;
}
.tooltip b { color: #fff; font-weight: 600; letter-spacing: -0.080px; }
.cursor { position: absolute; left: 1595px; top: 41px; z-index: 4; }

.toolbar { height: 54px; flex: none; display: flex; align-items: center; background: #47484d; padding-bottom: 1px; }
.back { margin-left: 23px; }
.fwd { margin-left: 29px; }
.reload { margin-left: 29px; }
.home { margin-left: 27px; }
.urlbar {
  width: 1897px; height: 42px; margin-left: 170px; display: flex; align-items: center;
  background: #272833; border: 3px solid #34507f; border-radius: 5px; box-shadow: inset 0 3px 3px #20294b;
}
.engine { width: 60px; height: 36px; display: flex; align-items: center; gap: 10px; padding-left: 7px; background: #42434a; }
.placeholder { margin-left: 10px; color: #74757d; font-size: 19.300px; }
.account { margin-left: 169px; margin-top: -3px; }
.ext { margin-left: 22px; }
.burger { margin-left: 29px; }

.bookmarks {
  height: 41px; flex: none; display: flex; align-items: center; padding: 0 0 1px 16px;
  background: #47484d; border-bottom: 2px solid #1b1b20; letter-spacing: -0.170px;
}
.bm { display: flex; align-items: center; gap: 5px; }
.bm svg { width: 22px; height: 22px; }
.blk { color: #0c0c0e; }
.w-off { width: 101px; }
.w-linux { width: 126px; letter-spacing: -0.250px; }
.w-tools { width: 127px; }
.w-docs { width: 121px; gap: 4px; }
.w-forums { width: 147px; }
.w-net { width: 171px; letter-spacing: -0.220px; }
.w-exp { width: 139px; letter-spacing: 0.200px; }
.w-ghdb { letter-spacing: -0.270px; }

.newtab { position: relative; height: 1017px; flex: none; background: #2b2a33; display: flex; flex-direction: column; align-items: center; }
.brand { margin-top: 270px; height: 87px; width: 243px; display: flex; align-items: center; gap: 21px; color: #fbfbfe; font: 600 42.300px/60px "Inter", sans-serif; }
.search {
  width: 960px; height: 69px; margin-top: 51px; display: flex; align-items: center; gap: 16px;
  padding-left: 22px; background: #42414d; border-radius: 8px; color: #9d9ca6;
  box-shadow: 0 2px 6px rgba(20, 20, 28, .3);
}
.shortcuts { display: flex; margin: 79px 320px 0 0; width: 960px; }
.tile { width: 160px; display: flex; flex-direction: column; align-items: center; }
.box {
  width: 85px; height: 85px; border-radius: 20px; background: #3f3d49;
  display: flex; align-items: center; justify-content: center; box-shadow: 0 2px 6px rgba(20, 20, 28, .2);
}
.box.add { background: #35343e; }
.tile p { margin: 10px 0 0; text-align: center; font-size: 18.600px; line-height: 25px; letter-spacing: -0.060px; color: #f0f0f4; }
.vul { margin-left: 8px; letter-spacing: 0.300px; }
.letter { width: 54px; height: 54px; border-radius: 50%; background: #c26a09; color: #fff; font-size: 31px; font-weight: 600; line-height: 54px; text-align: center; }
.ndtv { width: 54px; height: 54px; border-radius: 9px; background: #90141b; color: #ffdfe0; font: 700 12px/54px "Inter", sans-serif; text-align: center; }
.ndtv span { display: inline-block; transform: scaleX(1.120); }
.gear { position: absolute; left: 2497px; top: 956px; }

.statusbar {
  position: relative; height: 37px; flex: none; display: flex; align-items: center;
  padding-left: 2126px; padding-top: 5px; background: #f3f3f3; color: #1b1b1b; border-bottom: 2px solid #b4b6b2;
}
.dashes { position: absolute; left: 0; top: 0; }
.indicators { display: flex; gap: 5.900px; margin-top: 1px; }
.indicators svg { width: 26px; height: 26px; overflow: visible; }
.hostkey { margin-left: 4px; letter-spacing: -0.100px; margin-top: 2px; }
.edge { height: 7px; flex: none; background: #e8ede4; border-bottom: 2px solid #000; }
```
